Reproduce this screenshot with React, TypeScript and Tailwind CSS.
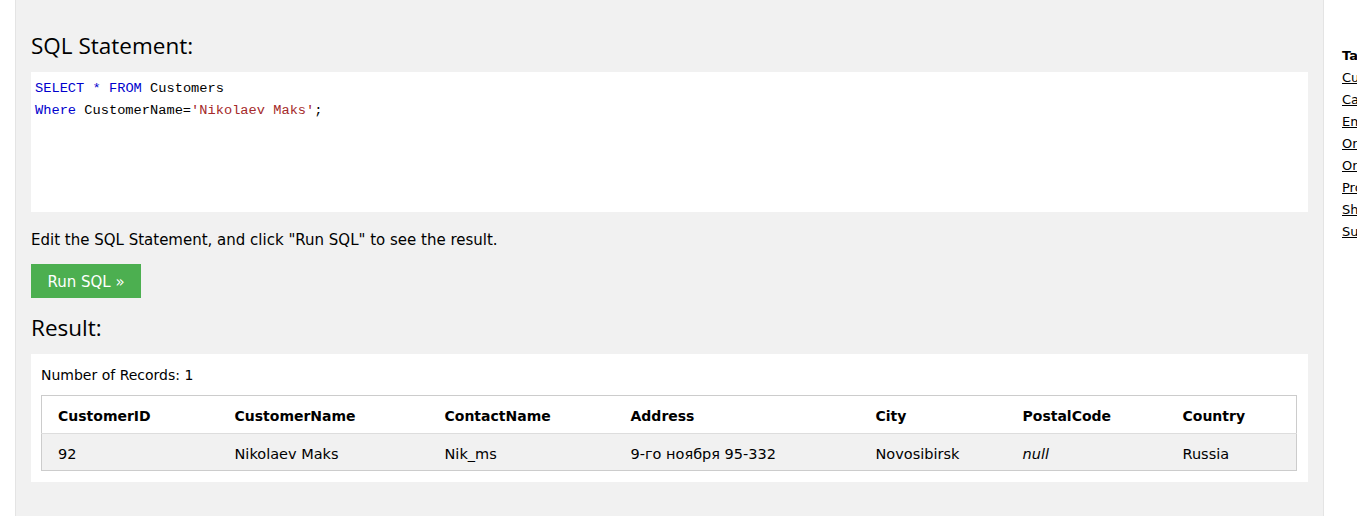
const columns = [
  { name: "CustomerID", width: "w-[177px]" },
  { name: "CustomerName", width: "w-[210px]" },
  { name: "ContactName", width: "w-[186px]" },
  { name: "Address", width: "w-[245px]" },
  { name: "City", width: "w-[147px]" },
  { name: "PostalCode", width: "w-[160px]" },
  { name: "Country", width: "w-[130px]" },
]

const tables = [
  "Customers",
  "Categories",
  "Employees",
  "OrderDetails",
  "Orders",
  "Products",
  "Shippers",
  "Suppliers",
]

export default function App() {
  return (
    <div className="flex h-[516px] w-[1357px] overflow-hidden bg-white font-['DejaVu_Sans',sans-serif] text-black">
      {/* main panel */}
      <div className="ml-[15px] h-full w-[1309px] shrink-0 border-x border-[#e4e4e4] bg-[#f1f1f1] px-[15px] pt-[31px]">
        <h2 className="font-['Open_Sans',sans-serif] text-[22.5px] leading-[30px]">SQL Statement:</h2>
        <div className="mt-[11px] h-[140px] bg-white px-[4px] pt-[6px] font-['Liberation_Mono',monospace] text-[13.7px] leading-[22px]">
          <div>
            <span className="text-[#0000cd]">SELECT</span>{" "}
            <span className="text-[#0000cd]">*</span>{" "}
            <span className="text-[#0000cd]">FROM</span> Customers
          </div>
          <div>
            <span className="text-[#0000cd]">Where</span> CustomerName=
            <span className="text-[#a52a2a]">'Nikolaev Maks'</span>;
          </div>
        </div>
        <p className="mt-[17px] text-[15px] leading-[22px]">
          Edit the SQL Statement, and click "Run SQL" to see the result.
        </p>
        <button className="mt-[13px] flex h-[34px] w-[110px] items-center justify-center bg-[#4caf50] pt-[2px] text-[15px] text-white">
          Run SQL »
        </button>
        <h2 className="mt-[15px] font-['Open_Sans',sans-serif] text-[22.5px] leading-[30px]">Result:</h2>
        <div className="mt-[11px] bg-white px-[10px] pt-[11px] pb-[11px]">
          <div className="text-[14px] leading-[20px]">Number of Records: 1</div>
          <table className="mt-[10px] w-[1255px] table-fixed border-collapse border border-[#cccccc] text-[14.5px]">
            <colgroup>
              {columns.map((c) => (
                <col key={c.name} className={c.width} />
              ))}
            </colgroup>
            <thead>
              <tr className="h-[38px] border-b border-[#dddddd]">
                {columns.map((c) => (
                  <th key={c.name} className="pt-[3px] pl-[16px] text-left text-[14px] font-bold">
                    {c.name}
                  </th>
                ))}
              </tr>
            </thead>
            <tbody>
              <tr className="h-[37px] bg-[#f1f1f1]">
                <td className="pt-[5px] pl-[16px]">92</td>
                <td className="pt-[5px] pl-[16px]">Nikolaev Maks</td>
                <td className="pt-[5px] pl-[16px]">Nik_ms</td>
                <td className="pt-[5px] pl-[16px]">9-го ноября 95-332</td>
                <td className="pt-[5px] pl-[16px]">Novosibirsk</td>
                <td className="pt-[5px] pl-[16px] italic">null</td>
                <td className="pt-[5px] pl-[16px]">Russia</td>
              </tr>
            </tbody>
          </table>
        </div>
      </div>

      {/* sidebar */}
      <div className="ml-[18px] shrink-0 pt-[45px] text-[13px] leading-[22px]">
        <div className="font-bold">Tables</div>
        {tables.map((t) => (
          <div key={t}>
            <a href="#" className="underline">
              {t}
            </a>
          </div>
        ))}
      </div>
    </div>
  )
}
